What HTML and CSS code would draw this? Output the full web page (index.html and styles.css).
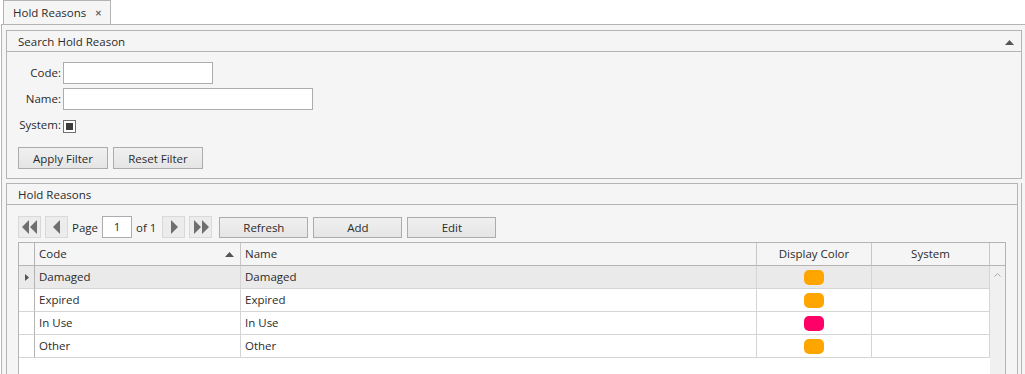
FILE: index.html
```html
<!DOCTYPE html>
<html lang="en">

<head>
    <meta charset="UTF-8">
    <meta name="viewport" content="width=device-width, initial-scale=1.0">
    <title>Hold Reasons</title>
    <link rel="stylesheet" href="styles.css">
</head>

<body>
    <div class="tabstrip">
        <div class="tab">Hold Reasons <span class="tab-close">&#x2715;</span></div>
    </div>

    <div class="content">
        <div class="group search-group">
            <div class="group-header">
                <span>Search Hold Reason</span>
                <svg class="collapse" width="9" height="5" viewBox="0 0 9 5"><path d="M0 5 L4.5 0 L9 5 Z" fill="#555"/></svg>
            </div>
            <div class="search-body">
                <div class="form">
                    <label>Code:</label>
                    <input type="text" class="input-code">
                    <label>Name:</label>
                    <input type="text" class="input-name">
                    <label>System:</label>
                    <span class="checkbox"><span class="check-fill"></span></span>
                </div>
                <div class="button-row">
                    <button class="btn">Apply Filter</button>
                    <button class="btn">Reset Filter</button>
                </div>
            </div>
        </div>

        <div class="list-wrap">
            <div class="group list-group">
                <div class="group-header">
                    <span>Hold Reasons</span>
                </div>
                <div class="list-body">
                    <div class="pager">
                        <button class="nav-btn">
                            <svg width="18" height="14" viewBox="0 0 18 14"><path d="M8 0 L8 14 L1 7 Z M16 0 L16 14 L9 7 Z" fill="#6f6f6f"/></svg>
                        </button>
                        <button class="nav-btn">
                            <svg width="10" height="14" viewBox="0 0 10 14"><path d="M8 0 L8 14 L1 7 Z" fill="#6f6f6f"/></svg>
                        </button>
                        <span class="page-label">Page</span>
                        <span class="page-input">1</span>
                        <span class="page-label page-total">of 1</span>
                        <button class="nav-btn">
                            <svg width="10" height="14" viewBox="0 0 10 14"><path d="M2 0 L2 14 L9 7 Z" fill="#6f6f6f"/></svg>
                        </button>
                        <button class="nav-btn">
                            <svg width="18" height="14" viewBox="0 0 18 14"><path d="M2 0 L2 14 L9 7 Z M10 0 L10 14 L17 7 Z" fill="#6f6f6f"/></svg>
                        </button>
                        <button class="btn pager-btn">Refresh</button>
                        <button class="btn pager-btn">Add</button>
                        <button class="btn pager-btn">Edit</button>
                    </div>

                    <div class="grid">
                        <div class="cell head rowhead"></div>
                        <div class="cell head">Code
                            <svg class="sort" width="9" height="5" viewBox="0 0 9 5"><path d="M0 5 L4.5 0 L9 5 Z" fill="#555"/></svg>
                        </div>
                        <div class="cell head">Name</div>
                        <div class="cell head center">Display Color</div>
                        <div class="cell head center">System</div>
                        <div class="cell head last"></div>

                        <div class="cell rowhead selected">
                            <svg width="4" height="7" viewBox="0 0 4 7"><path d="M0 0 L4 3.5 L0 7 Z" fill="#555"/></svg>
                        </div>
                        <div class="cell selected">Damaged</div>
                        <div class="cell selected">Damaged</div>
                        <div class="cell selected center"><span class="swatch orange"></span></div>
                        <div class="cell selected"></div>
                        <div class="scroll-col">
                            <svg width="7" height="4" viewBox="0 0 7 4"><path d="M0.5 3.5 L3.5 0.5 L6.5 3.5" fill="none" stroke="#aaa" stroke-width="1"/></svg>
                        </div>

                        <div class="cell rowhead"></div>
                        <div class="cell">Expired</div>
                        <div class="cell">Expired</div>
                        <div class="cell center"><span class="swatch orange"></span></div>
                        <div class="cell"></div>

                        <div class="cell rowhead"></div>
                        <div class="cell">In Use</div>
                        <div class="cell">In Use</div>
                        <div class="cell center"><span class="swatch pink"></span></div>
                        <div class="cell"></div>

                        <div class="cell rowhead"></div>
                        <div class="cell">Other</div>
                        <div class="cell">Other</div>
                        <div class="cell center"><span class="swatch orange"></span></div>
                        <div class="cell"></div>

                        <div class="grid-empty"></div>
                    </div>
                </div>
            </div>
        </div>
    </div>
</body>

</html>
```

FILE: styles.css
```css
* {
    box-sizing: border-box;
}

body {
    margin: 0;
    background: #fff;
    font-family: "Open Sans", "Noto Sans", sans-serif;
    font-size: 11.5px;
    color: #2b2b2b;
    height: 374px;
    overflow: hidden;
}

.tabstrip {
    height: 24px;
    padding-left: 3px;
    display: flex;
    align-items: flex-end;
}

.tab {
    width: 108px;
    height: 24px;
    border: 1px solid #b4b4b4;
    border-bottom: none;
    background: #f5f5f5;
    padding: 4px 0 0 9px;
    white-space: nowrap;
}

.tab-close {
    font-size: 8px;
    font-weight: bold;
    color: #666;
    margin-left: 6px;
    vertical-align: 1px;
}

.content {
    margin-left: 1px;
    border-top: 1px solid #b4b4b4;
    border-left: 1px solid #b4b4b4;
    background: #f5f5f5;
    padding: 5px 3px 0 4px;
    height: 350px;
}

.group {
    border: 1px solid #b4b4b4;
    background: #f5f5f5;
}

.group-header {
    height: 21px;
    border-bottom: 1px solid #b4b4b4;
    padding: 3px 0 0 11px;
    display: flex;
    justify-content: space-between;
}

.collapse {
    margin: 6px 7px 0 0;
}

.search-group {
    height: 149px;
}

.search-body {
    padding: 10px 0 0 11px;
}

.form {
    display: grid;
    grid-template-columns: 43px auto;
    column-gap: 2px;
    row-gap: 4px;
    align-items: center;
}

.form label {
    text-align: right;
    line-height: 22px;
}

.form input {
    height: 22px;
    border: 1px solid #acacac;
    background: #fff;
    margin: 0;
    font: inherit;
}

.input-code {
    width: 150px;
}

.input-name {
    width: 250px;
}

.checkbox {
    width: 13px;
    height: 13px;
    border: 1px solid #707070;
    background: #fff;
    display: flex;
    align-items: center;
    justify-content: center;
    margin-top: 2px;
}

.check-fill {
    width: 7px;
    height: 7px;
    background: #3c3c3c;
}

.button-row {
    display: flex;
    gap: 5px;
    margin-top: 11px;
}

.btn {
    font: inherit;
    color: #2b2b2b;
    height: 22px;
    padding: 0;
    border: 1px solid #acacac;
    background: linear-gradient(#f0f0f0, #e5e5e5);
    width: 90px;
}

.list-wrap {
    margin-top: 4px;
    border-right: 1px solid #b4b4b4;
    padding-right: 3px;
    height: 192px;
}

.list-group {
    height: 200px;
    border-bottom: none;
}

.list-body {
    padding: 11px 0 0 11px;
}

.pager {
    display: flex;
    align-items: center;
    height: 22px;
    gap: 4px;
}

.nav-btn {
    width: 23px;
    height: 22px;
    padding: 0;
    border: 1px solid #d9d9d9;
    background: #ececec;
    display: flex;
    align-items: center;
    justify-content: center;
}

.page-input {
    width: 30px;
    height: 22px;
    border: 1px solid #acacac;
    background: #fff;
    text-align: center;
    line-height: 20px;
}

.page-total {
    margin-right: 2px;
}

.pager-btn {
    width: 89px;
    height: 21px;
    margin-left: 3px;
}

.pager-btn + .pager-btn {
    margin-left: 1px;
}

.grid {
    margin-top: 4px;
    width: 988px;
    height: 140px;
    border: 1px solid #b4b4b4;
    background: #fff;
    display: grid;
    grid-template-columns: 16px 206px 516px 115px 118px 15px;
    grid-template-rows: 23px repeat(4, 23px) 1fr;
}

.cell {
    border-right: 1px solid #d5d5d5;
    border-bottom: 1px solid #d5d5d5;
    padding: 0 0 0 4px;
    line-height: 22px;
    white-space: nowrap;
    display: flex;
    align-items: center;
}

.cell.center {
    justify-content: center;
    padding: 0;
}

.head {
    background: #f5f5f5;
    border-bottom: 1px solid #b4b4b4;
    border-right: 1px solid #c8c8c8;
    position: relative;
}

.head.last {
    border-right: none;
}

.rowhead {
    padding: 0;
    justify-content: center;
    border-right: 1px solid #b4b4b4;
}

.sort {
    position: absolute;
    right: 6px;
    top: 9px;
}

.selected {
    background: #eaeaea;
}

.scroll-col {
    grid-column: 6;
    grid-row: 2 / span 5;
    background: #f0f0f0;
    display: flex;
    justify-content: center;
    padding-top: 7px;
}

.grid-empty {
    grid-column: 1 / span 5;
    grid-row: 6;
}

.swatch {
    width: 20px;
    height: 15px;
    border-radius: 5px;
}

.orange {
    background: #ffa500;
}

.pink {
    background: #ff0066;
}
```
